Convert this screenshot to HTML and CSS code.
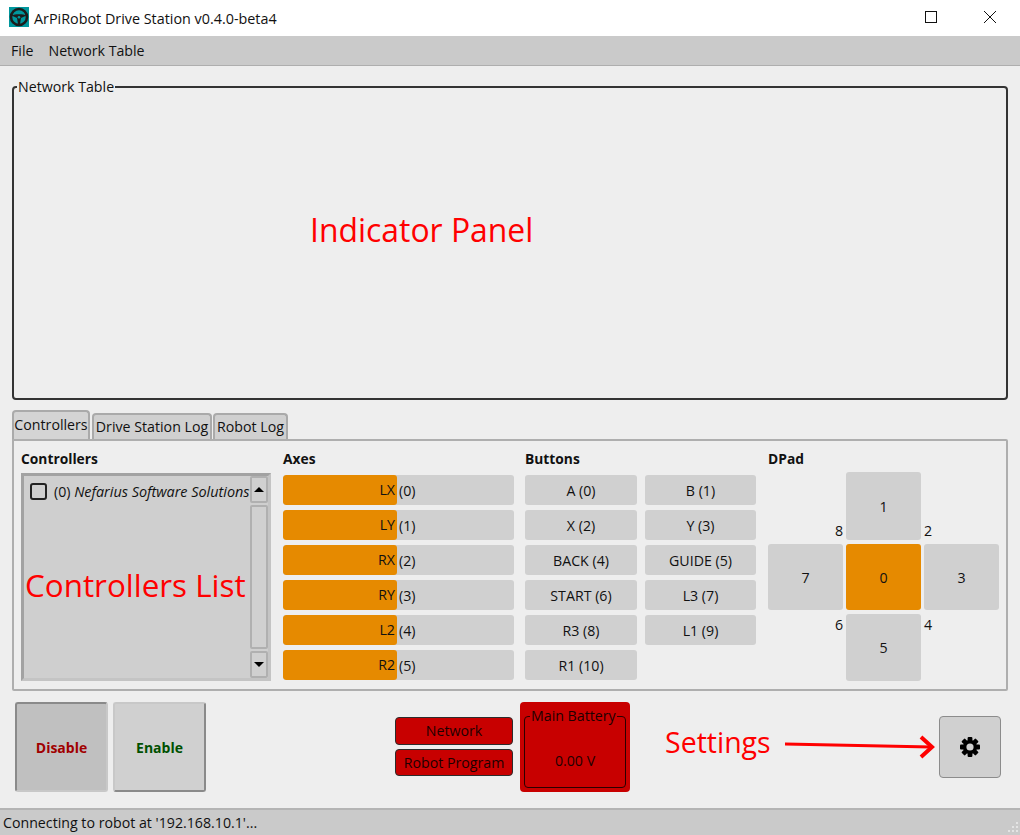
FILE: index.html
```html
<!DOCTYPE html>
<html lang="en">
<head>
  <meta charset="UTF-8">
  <link rel="stylesheet" href="styles.css">
</head>
<body>
  <div class="window">
    <div class="titlebar">
      <svg class="app-icon" width="20" height="20" viewBox="0 0 20 20">
        <rect width="20" height="20" fill="#00979d"/>
        <circle cx="10" cy="10" r="8" fill="none" stroke="#1c1c1c" stroke-width="2.6"/>
        <path d="M2.5 8.5 C6 6.8 14 6.8 17.5 8.5 L12 11 L11 17 L9 17 L8 11 Z" fill="#1c1c1c"/>
        <circle cx="10" cy="10.2" r="1.3" fill="#00979d"/>
      </svg>
      <span class="title">ArPiRobot Drive Station v0.4.0-beta4</span>
      <div class="win-controls">
        <svg class="win-btn" width="58" height="36" viewBox="0 0 58 36">
          <rect x="23.5" y="11.5" width="11" height="11" fill="none" stroke="#111"/>
        </svg>
        <svg class="win-btn" width="58" height="36" viewBox="0 0 58 36">
          <path d="M24 11 L36 23 M36 11 L24 23" stroke="#111" fill="none"/>
        </svg>
      </div>
    </div>

    <div class="menubar">
      <span>File</span>
      <span>Network Table</span>
    </div>

    <div class="content">
      <fieldset class="net-table">
        <legend>Network Table</legend>
      </fieldset>

      <div class="tabs">
        <div class="tab tab-controllers active">Controllers</div>
        <div class="tab tab-dslog">Drive Station Log</div>
        <div class="tab tab-robotlog">Robot Log</div>
      </div>

      <div class="pane">
        <div class="col col-controllers">
          <div class="heading">Controllers</div>
          <div class="list">
            <div class="list-body">
              <span class="check"></span>
              <span class="list-text">(0) <em>Nefarius Software Solutions</em></span>
            </div>
            <div class="scrollbar">
              <div class="sb-btn"><span class="arrow-up"></span></div>
              <div class="sb-track"></div>
              <div class="sb-btn"><span class="arrow-down"></span></div>
            </div>
          </div>
        </div>

        <div class="col col-axes">
          <div class="heading">Axes</div>
          <div class="axis"><div class="axis-fill">LX</div><div class="axis-num">(0)</div></div>
          <div class="axis"><div class="axis-fill">LY</div><div class="axis-num">(1)</div></div>
          <div class="axis"><div class="axis-fill">RX</div><div class="axis-num">(2)</div></div>
          <div class="axis"><div class="axis-fill">RY</div><div class="axis-num">(3)</div></div>
          <div class="axis"><div class="axis-fill">L2</div><div class="axis-num">(4)</div></div>
          <div class="axis"><div class="axis-fill">R2</div><div class="axis-num">(5)</div></div>
        </div>

        <div class="col col-buttons">
          <div class="heading">Buttons</div>
          <div class="btn-grid">
            <div class="pad-btn">A (0)</div>
            <div class="pad-btn">B (1)</div>
            <div class="pad-btn">X (2)</div>
            <div class="pad-btn">Y (3)</div>
            <div class="pad-btn">BACK (4)</div>
            <div class="pad-btn">GUIDE (5)</div>
            <div class="pad-btn">START (6)</div>
            <div class="pad-btn">L3 (7)</div>
            <div class="pad-btn">R3 (8)</div>
            <div class="pad-btn">L1 (9)</div>
            <div class="pad-btn">R1 (10)</div>
          </div>
        </div>

        <div class="col col-dpad">
          <div class="heading dpad-heading">DPad</div>
          <div class="dpad">
            <div class="corner corner-top">8</div>
            <div class="pad-btn">1</div>
            <div class="corner corner-top corner-right">2</div>
            <div class="pad-btn">7</div>
            <div class="pad-btn on">0</div>
            <div class="pad-btn">3</div>
            <div class="corner">6</div>
            <div class="pad-btn">5</div>
            <div class="corner corner-right">4</div>
          </div>
        </div>
      </div>

      <div class="bottom">
        <div class="state-btn disable">Disable</div>
        <div class="state-btn enable">Enable</div>
        <div class="indicators">
          <div class="indicator">Network</div>
          <div class="indicator">Robot Program</div>
        </div>
        <div class="battery">
          <fieldset class="battery-box">
            <legend>Main Battery</legend>
            <div class="battery-value">0.00 V</div>
          </fieldset>
        </div>
        <div class="settings-btn">
          <svg width="22" height="22" viewBox="0 0 22 22">
            <g fill="#000">
              <rect x="8.6" y="1" width="4.8" height="20" rx="1"/>
              <rect x="8.6" y="1" width="4.8" height="20" rx="1" transform="rotate(45 11 11)"/>
              <rect x="8.6" y="1" width="4.8" height="20" rx="1" transform="rotate(90 11 11)"/>
              <rect x="8.6" y="1" width="4.8" height="20" rx="1" transform="rotate(135 11 11)"/>
            </g>
            <circle cx="11" cy="11" r="5.3" fill="none" stroke="#000" stroke-width="3.4"/>
            <circle cx="11" cy="11" r="3.6" fill="#d0d0d0"/>
          </svg>
        </div>
      </div>
    </div>

    <div class="statusbar">
      <span>Connecting to robot at '192.168.10.1'...</span>
      <svg class="grip" width="12" height="12" viewBox="0 0 12 12" fill="#e4e4e4">
        <rect x="9" y="0" width="2" height="2"/>
        <rect x="5" y="4" width="2" height="2"/>
        <rect x="9" y="4" width="2" height="2"/>
        <rect x="1" y="8" width="2" height="2"/>
        <rect x="5" y="8" width="2" height="2"/>
        <rect x="9" y="8" width="2" height="2"/>
      </svg>
    </div>

    <!-- red notes drawn on top of the screenshot -->
    <div class="note note-indicator">Indicator Panel</div>
    <div class="note note-controllers">Controllers List</div>
    <div class="note note-settings">Settings</div>
    <svg class="note-arrow" width="160" height="30" viewBox="0 0 160 30">
      <path d="M0 11 L146 14" stroke="#f00" stroke-width="3" fill="none"/>
      <path d="M136 4 L147 14 L136 24" stroke="#f00" stroke-width="4" fill="none"/>
    </svg>
  </div>
</body>
</html>
```

FILE: styles.css
```css
* {
  box-sizing: border-box;
}
html, body {
  margin: 0;
  padding: 0;
}
body {
  font-family: "Open Sans", "Noto Sans", sans-serif;
  font-size: 14.2px;
  color: #111;
  background: #eee;
  overflow: hidden;
}
.window {
  position: relative;
  width: 1020px;
  height: 835px;
  display: flex;
  flex-direction: column;
  overflow: hidden;
}

/* title + menu */
.titlebar {
  height: 36px;
  background: #fff;
  display: flex;
  align-items: center;
  padding-left: 9px;
  flex-shrink: 0;
}
.app-icon {
  margin-right: 5px;
  margin-bottom: 2px;
}
.title {
  font-size: 14.35px;
}
.win-controls {
  margin-left: auto;
  padding-right: 2px;
  display: flex;
}
.win-btn {
  display: block;
}
.menubar {
  height: 30px;
  background: #cacaca;
  border-bottom: 1px solid #aeaeae;
  display: flex;
  align-items: center;
  gap: 15px;
  padding-left: 11px;
  flex-shrink: 0;
}

.content {
  flex: 1;
  min-height: 0;
  padding: 0 12px;
  display: flex;
  flex-direction: column;
}

/* group boxes */
fieldset {
  margin: 0;
  min-width: 0;
}
legend {
  padding: 0 1px;
  line-height: 19px;
}
.net-table {
  height: 323px;
  margin-top: 11px;
  border: 2px solid #333;
  border-radius: 4px;
  padding: 0 3px;
  width: 996px;
  flex-shrink: 0;
}

/* tabs */
.tabs {
  display: flex;
  align-items: flex-end;
  height: 29px;
  margin-top: 10px;
  gap: 1px;
  flex-shrink: 0;
}
.tab {
  height: 26px;
  line-height: 24px;
  text-align: center;
  white-space: nowrap;
  background: #d0d0d0;
  border: 2px solid #aaa;
  border-bottom: none;
  border-radius: 4px 4px 0 0;
}
.tab.active {
  height: 29px;
  line-height: 25px;
  margin-right: 1px;
  background: #d4d4d4;
}
.tab-controllers {
  width: 78px;
}
.tab-dslog {
  width: 120px;
}
.tab-robotlog {
  width: 75px;
}
.pane {
  height: 252px;
  width: 996px;
  border: 2px solid #aeaeae;
  border-radius: 0 2px 2px 2px;
  padding: 9px 7px 0;
  display: flex;
  flex-shrink: 0;
}
.heading {
  font-weight: 700;
  font-size: 13.8px;
  line-height: 18px;
  height: 25px;
  white-space: nowrap;
}

/* controllers list */
.col-controllers {
  width: 250px;
  margin-right: 12px;
}
.col-controllers .heading {
  height: 23px;
}
.list {
  height: 208px;
  border: 3px solid #a2a2a2;
  border-right-color: #c4c4c4;
  border-bottom-color: #c4c4c4;
  background: #cfcfcf;
  display: flex;
}
.list-body {
  flex: 1;
  min-width: 0;
  display: flex;
  align-items: center;
  align-self: flex-start;
  height: 30px;
  padding-left: 6px;
  overflow: hidden;
  white-space: nowrap;
}
.list-text em {
  font-size: 14.4px;
}
.check {
  width: 17px;
  height: 17px;
  border: 2px solid #222;
  border-radius: 3px;
  margin-right: 7px;
  flex-shrink: 0;
}
.scrollbar {
  width: 18px;
  flex-shrink: 0;
  display: flex;
  flex-direction: column;
  gap: 2px;
}
.sb-btn {
  height: 27px;
  background: #d0d0d0;
  border: 2px solid #b0b0b0;
  border-radius: 2px;
  display: flex;
  align-items: center;
  justify-content: center;
}
.sb-track {
  flex: 1;
  background: #d0d0d0;
  border: 2px solid #b0b0b0;
  border-radius: 2px;
}
.arrow-up {
  border-left: 5px solid transparent;
  border-right: 5px solid transparent;
  border-bottom: 5px solid #000;
}
.arrow-down {
  border-left: 5px solid transparent;
  border-right: 5px solid transparent;
  border-top: 5px solid #000;
}

/* axes */
.col-axes {
  width: 231px;
  margin-right: 11px;
}
.axis {
  height: 30px;
  margin-bottom: 5px;
  background: #d0d0d0;
  border-radius: 3px;
  display: flex;
  align-items: center;
  overflow: hidden;
}
.axis-fill {
  width: 114px;
  height: 30px;
  line-height: 30px;
  text-align: right;
  padding-right: 2px;
  background: #e68a00;
  border-radius: 3px;
}
.axis-num {
  padding-left: 2px;
}

/* buttons */
.col-buttons {
  width: 231px;
  margin-right: 12px;
}
.btn-grid {
  display: grid;
  grid-template-columns: 112px 111px;
  grid-auto-rows: 30px;
  column-gap: 8px;
  row-gap: 5px;
}
.pad-btn {
  background: #d0d0d0;
  border-radius: 3px;
  display: flex;
  align-items: center;
  justify-content: center;
}
.pad-btn.on {
  background: #e68a00;
}

/* dpad */
.col-dpad {
  width: 231px;
}
.dpad-heading {
  height: 22px;
}
.dpad {
  display: grid;
  grid-template-columns: 75px 75px 75px;
  grid-template-rows: 68px 66px 67px;
  column-gap: 3px;
  row-gap: 4px;
}
.corner {
  text-align: right;
  line-height: 19px;
  padding-top: 1px;
}
.corner-top {
  align-self: end;
  padding-top: 0;
}
.corner-right {
  text-align: left;
}

/* bottom row */
.bottom {
  height: 117px;
  display: flex;
  align-items: flex-start;
  padding-left: 3px;
}
.state-btn {
  width: 93px;
  height: 90px;
  margin-top: 11px;
  margin-right: 5px;
  display: flex;
  align-items: center;
  justify-content: center;
  font-weight: 700;
  font-size: 14px;
  border-radius: 3px;
}
.disable {
  color: #a00000;
  background: #c0c0c0;
  border: 2px solid #c8c8c8;
  border-top-color: #8a8a8a;
  border-left-color: #8a8a8a;
}
.enable {
  color: #005000;
  background: #d0d0d0;
  border: 2px solid #c8c8c8;
  border-right-color: #8a8a8a;
  border-bottom-color: #8a8a8a;
}
.indicators {
  width: 118px;
  margin-left: 184px;
  margin-top: 26px;
  display: flex;
  flex-direction: column;
  gap: 4px;
}
.indicator {
  height: 27px;
  background: #c80000;
  border: 1px solid #2c2c2c;
  border-radius: 4px;
  text-align: center;
  line-height: 26px;
  white-space: nowrap;
  color: #1d0000;
}
.indicator:first-child {
  height: 28px;
}
.battery {
  width: 110px;
  height: 90px;
  margin-top: 11px;
  margin-left: 7px;
  background: #c80000;
  border-radius: 4px;
  padding: 5px 4px 3px;
  color: #1d0000;
}
.battery-box {
  height: 81px;
  border: 1px solid #2c0000;
  border-radius: 4px;
  padding: 0;
}
.battery-box legend {
  margin-left: 5px;
  line-height: 18px;
}
.battery-value {
  text-align: center;
  margin-top: 26px;
}
.settings-btn {
  width: 62px;
  height: 62px;
  margin-top: 25px;
  margin-left: 309px;
  background: #d0d0d0;
  border: 1px solid #8c8c8c;
  border-radius: 4px;
  display: flex;
  align-items: center;
  justify-content: center;
}

/* status */
.statusbar {
  height: 27px;
  background: #cacaca;
  border-top: 2px solid #b4b4b4;
  padding-left: 3px;
  line-height: 26px;
  position: relative;
  flex-shrink: 0;
}
.grip {
  position: absolute;
  right: 1px;
  bottom: 1px;
}

/* annotations */
.note {
  position: absolute;
  color: #f00;
  line-height: 40px;
  white-space: nowrap;
}
.note-indicator {
  left: 310px;
  top: 210px;
  font-size: 31.9px;
}
.note-controllers {
  left: 25px;
  top: 565px;
  font-size: 31.4px;
}
.note-settings {
  left: 665px;
  top: 722px;
  font-size: 28.5px;
}
.note-arrow {
  position: absolute;
  left: 785px;
  top: 733px;
}
```
